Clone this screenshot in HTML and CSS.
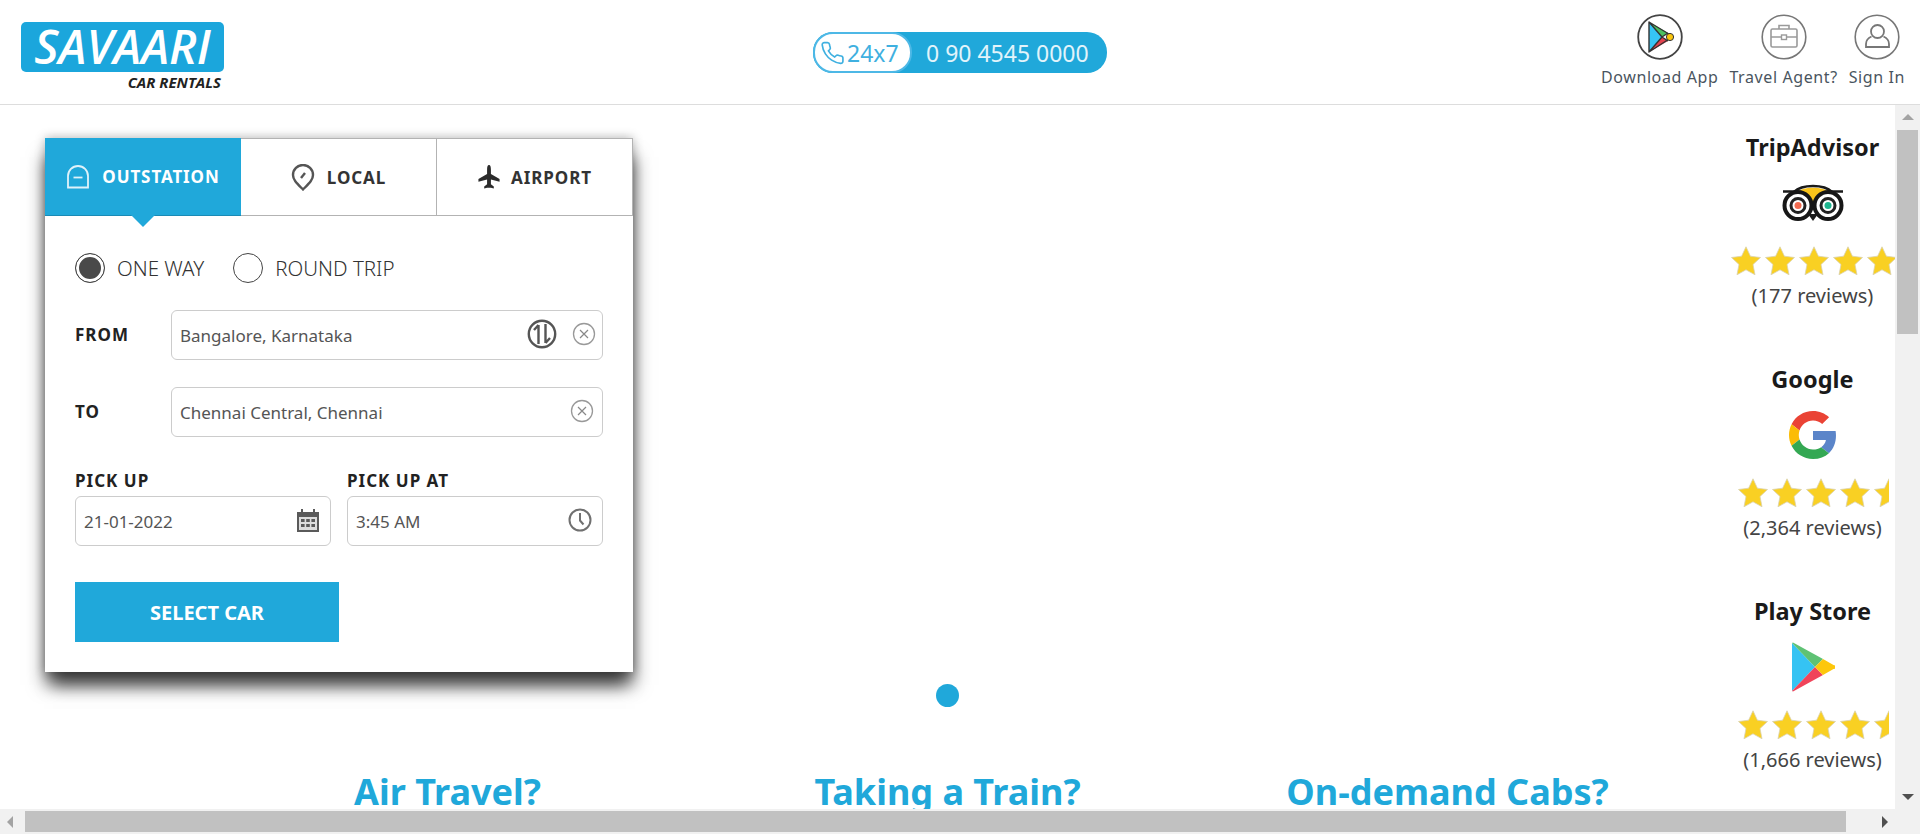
FILE: index.html
```html
<!DOCTYPE html>
<html lang="en">
<head>
  <meta charset="UTF-8" />
  <meta name="viewport" content="width=device-width, initial-scale=1.0" />
  <title>Savaari Car Rentals</title>
  <link rel="stylesheet" href="styles.css">
</head>
<body>
  <svg class="defs" width="0" height="0">
    <symbol id="star" viewBox="0 0 30 30">
      <polygon points="15,0.8 19.4,10.2 29.5,11.5 22,18.5 24,28.8 15,23.8 6,28.8 8,18.5 0.5,11.5 10.6,10.2" fill="#f9d023" stroke="#d9d2b0" stroke-width="0.8"/>
    </symbol>
    <symbol id="clear" viewBox="0 0 24 24">
      <circle cx="12" cy="12" r="10.5" fill="none" stroke="#999" stroke-width="1.3"/>
      <path d="M8 8l8 8M16 8l-8 8" stroke="#888" stroke-width="1.2"/>
    </symbol>
  </svg>

  <header class="header">
    <div class="logo">
      <div class="logo-box">SAVAARI</div>
      <div class="logo-sub">CAR RENTALS</div>
    </div>
    <div class="phone">
      <div class="phone-tag">
        <svg width="25" height="26" viewBox="0 0 24 24" fill="none" stroke="#3fb0e0" stroke-width="1.6"><path d="M22 16.92v3a2 2 0 0 1-2.18 2 19.79 19.79 0 0 1-8.63-3.07 19.5 19.5 0 0 1-6-6 19.79 19.79 0 0 1-3.07-8.67A2 2 0 0 1 4.11 2h3a2 2 0 0 1 2 1.72 12.84 12.84 0 0 0 .7 2.81 2 2 0 0 1-.45 2.11L8.09 9.91a16 16 0 0 0 6 6l1.27-1.27a2 2 0 0 1 2.11-.45 12.84 12.84 0 0 0 2.81.7A2 2 0 0 1 22 16.92z"/></svg>
        <span>24x7</span>
      </div>
      <div class="phone-num">0 90 4545 0000</div>
    </div>
    <nav class="nav">
      <a class="nav-item">
        <svg width="46" height="46" viewBox="0 0 46 46">
          <circle cx="23" cy="23" r="21.8" fill="#fff" stroke="#444" stroke-width="1.8"/>
          <polygon points="12,8 25,23 12,38" fill="#36c5f5"/>
          <polygon points="12,8 31,19 25,23" fill="#4cc15f"/>
          <polygon points="12,38 31,27 25,23" fill="#e5424f"/>
          <path d="M12 8L36 22.5L12 38zM12 8L25 23L12 38M25 23L31 19M25 23L31 27" fill="none" stroke="#333" stroke-width="1.4" stroke-linejoin="round"/>
          <circle cx="33" cy="23" r="3.6" fill="#fbc60e" stroke="#333" stroke-width="1"/>
        </svg>
        <span>Download App</span>
      </a>
      <a class="nav-item">
        <svg width="46" height="46" viewBox="0 0 46 46" fill="none" stroke="#9a9a9a">
          <circle cx="23" cy="23" r="21.8" stroke="#777" stroke-width="1.6"/>
          <rect x="10" y="15" width="26" height="18" rx="1.5" stroke-width="1.6"/>
          <path d="M18 15v-3.5h10V15M10 23h10M26 23h10" stroke-width="1.6"/>
          <rect x="20.5" y="21" width="5" height="4.5" stroke-width="1.4"/>
        </svg>
        <span>Travel Agent?</span>
      </a>
      <a class="nav-item">
        <svg width="46" height="46" viewBox="0 0 46 46" fill="none" stroke="#777" stroke-width="1.8">
          <circle cx="23" cy="23" r="21.8" stroke-width="1.6"/>
          <circle cx="23.5" cy="17.5" r="6.5"/>
          <path d="M17.5 22.5c-3.5 1.5-5.5 4-5.5 7.5v3h23v-3c0-3.5-2-6-5.5-7.5"/>
        </svg>
        <span>Sign In</span>
      </a>
    </nav>
  </header>

  <div class="window">
    <main class="main">
      <div class="hero">
        <section class="card">
          <div class="tabs">
            <div class="tab active">
              <svg width="24" height="24" viewBox="0 0 24 24" fill="none" stroke="#dff2fa" stroke-width="1.8"><path d="M2 22.5V11a10 10 0 0 1 20 0v11.5z"/><path d="M7.5 12.5h9"/></svg>
              <span>OUTSTATION</span>
            </div>
            <div class="tab">
              <svg width="24" height="27" viewBox="0 0 24 27" fill="none" stroke="#555" stroke-width="2.4"><path d="M12 25.5C6 19.5 2 16 2 11a10 10 0 0 1 20 0c0 5-4 8.5-10 14.5z"/><path d="M10 14l4-5"/></svg>
              <span>LOCAL</span>
            </div>
            <div class="tab tab-air">
              <svg width="24" height="26" viewBox="0 0 25 26"><path d="M12.5 0.5c1.5 0 2 2 2 5v4.500l9 5v3l-9-2.500v5l3 2.500v2l-3-.8h-4l-3 .8v-2l3-2.500v-5l-9 2.500v-3l9-5V5.500c0-3 .5-5 2-5z" fill="#2b2b2b"/></svg>
              <span>AIRPORT</span>
            </div>
          </div>
          <form class="form">
            <div class="trip">
              <label class="radio checked">ONE WAY</label>
              <label class="radio">ROUND TRIP</label>
            </div>
            <div class="row row-from">
              <span class="label">FROM</span>
              <div class="field">
                <input value="Bangalore, Karnataka" />
                <svg class="swap" width="30" height="30" viewBox="0 0 30 30" fill="none" stroke="#555" stroke-width="2.4"><circle cx="15" cy="15" r="13.2"/><path d="M11.5 25V6M11.5 6L7 11M18.5 5V24M18.5 24L23 19"/></svg>
                <svg class="clear" width="24" height="24"><use href="#clear"/></svg>
              </div>
            </div>
            <div class="row row-to">
              <span class="label">TO</span>
              <div class="field">
                <input value="Chennai Central, Chennai" />
                <svg class="clear" width="24" height="24"><use href="#clear"/></svg>
              </div>
            </div>
            <div class="when">
              <div class="when-col">
                <span class="label">PICK UP</span>
                <div class="field">
                  <input value="21-01-2022" />
                  <svg class="when-icon" width="24" height="24" viewBox="0 0 24 24" fill="#5a5a5a"><path d="M1 4h4V1h2v3h10V1h2v3h4v20H1z"/><rect x="3" y="9" width="18" height="13" fill="#ddd"/><rect x="5" y="11" width="3.6" height="3"/><rect x="10.2" y="11" width="3.6" height="3"/><rect x="15.4" y="11" width="3.6" height="3"/><rect x="5" y="16" width="3.6" height="3"/><rect x="10.2" y="16" width="3.6" height="3"/><rect x="15.4" y="16" width="3.6" height="3"/></svg>
                </div>
              </div>
              <div class="when-col">
                <span class="label">PICK UP AT</span>
                <div class="field">
                  <input value="3:45 AM" />
                  <svg class="when-icon" width="24" height="24" viewBox="0 0 24 24" fill="none" stroke="#707070" stroke-width="2"><circle cx="12" cy="12" r="10.5"/><path d="M12 5v7.5l3.5 4"/></svg>
                </div>
              </div>
            </div>
            <button type="button" class="submit">SELECT CAR</button>
          </form>
        </section>
        <div class="dots"><span class="dot"></span></div>
        <div class="promos">
          <h2>Air Travel?</h2>
          <h2>Taking a Train?</h2>
          <h2>On-demand Cabs?</h2>
        </div>
      </div>

      <aside class="ratings">
        <div class="rating">
          <h4>TripAdvisor</h4>
          <div class="rating-icon">
            <svg width="62" height="38" viewBox="0 0 62 38">
              <path d="M14 9C20 2 42 2 48 9L31 22z" fill="#f9c31a"/>
              <path d="M12 8C20 0 42 0 50 8" fill="none" stroke="#1a1a1a" stroke-width="2.5"/>
              <path d="M1 7.5h13M48 7.5h13" stroke="#1a1a1a" stroke-width="2.5"/>
              <path d="M26 30l5 7 5-7z" fill="#1a1a1a"/>
              <g fill="#fff" stroke="#161616" stroke-width="4">
                <circle cx="16" cy="21.5" r="13.5"/>
                <circle cx="46" cy="21.5" r="13.5"/>
              </g>
              <circle cx="16" cy="21.5" r="7" fill="#fff" stroke="#222" stroke-width="3"/>
              <circle cx="46" cy="21.5" r="7" fill="#fff" stroke="#222" stroke-width="3"/>
              <circle cx="16" cy="21.5" r="3.5" fill="#f26b50"/>
              <circle cx="46" cy="21.5" r="3.5" fill="#1fb58f"/>
            </svg>
          </div>
          <div class="stars stars-full">
            <svg width="34" height="30"><use href="#star" width="32" height="30"/></svg>
            <svg width="34" height="30"><use href="#star" width="32" height="30"/></svg>
            <svg width="34" height="30"><use href="#star" width="32" height="30"/></svg>
            <svg width="34" height="30"><use href="#star" width="32" height="30"/></svg>
            <svg width="34" height="30"><use href="#star" width="32" height="30"/></svg>
          </div>
          <p>(177 reviews)</p>
        </div>
        <div class="rating">
          <h4>Google</h4>
          <div class="rating-icon">
            <svg width="48" height="48" viewBox="0 0 48 48">
              <path fill="#EA4335" d="M24 9.5c3.54 0 6.71 1.22 9.21 3.6l6.85-6.85C35.9 2.38 30.47 0 24 0 14.62 0 6.51 5.38 2.56 13.22l7.98 6.19C12.43 13.72 17.74 9.5 24 9.5z"/>
              <path fill="#5b85c9" d="M46.98 24.55c0-1.57-.15-3.09-.38-4.55H24v9.02h12.94c-.58 2.96-2.26 5.48-4.78 7.18l7.73 6c4.51-4.18 7.09-10.36 7.09-17.65z"/>
              <path fill="#FBBC05" d="M10.53 28.59c-.48-1.45-.76-2.99-.76-4.59s.27-3.14.76-4.59l-7.98-6.19C.92 16.46 0 20.12 0 24c0 3.88.92 7.54 2.56 10.78l7.97-6.19z"/>
              <path fill="#34A853" d="M24 48c6.48 0 11.93-2.13 15.89-5.81l-7.73-6c-2.15 1.45-4.92 2.3-8.16 2.3-6.26 0-11.57-4.22-13.47-9.91l-7.98 6.19C6.51 42.62 14.62 48 24 48z"/>
            </svg>
          </div>
          <div class="stars">
            <svg width="34" height="30"><use href="#star" width="32" height="30"/></svg>
            <svg width="34" height="30"><use href="#star" width="32" height="30"/></svg>
            <svg width="34" height="30"><use href="#star" width="32" height="30"/></svg>
            <svg width="34" height="30"><use href="#star" width="32" height="30"/></svg>
            <svg width="34" height="30"><use href="#star" width="32" height="30"/></svg>
          </div>
          <p>(2,364 reviews)</p>
        </div>
        <div class="rating">
          <h4>Play Store</h4>
          <div class="rating-icon">
            <svg width="44" height="50" viewBox="0 0 44 50">
              <polygon points="1,1 24,25 1,49" fill="#35c3f3"/>
              <polygon points="1,1 2,0.5 32,17 24,25" fill="#5fc274"/>
              <polygon points="1,49 2,49.5 32,33 24,25" fill="#f0445a"/>
              <path d="M32 17l10.5 6a2 2 0 0 1 0 4L32 33l-8-8z" fill="#fdc70c"/>
            </svg>
          </div>
          <div class="stars">
            <svg width="34" height="30"><use href="#star" width="32" height="30"/></svg>
            <svg width="34" height="30"><use href="#star" width="32" height="30"/></svg>
            <svg width="34" height="30"><use href="#star" width="32" height="30"/></svg>
            <svg width="34" height="30"><use href="#star" width="32" height="30"/></svg>
            <svg width="34" height="30"><use href="#star" width="32" height="30"/></svg>
          </div>
          <p>(1,666 reviews)</p>
        </div>
      </aside>
    </main>

    <div class="vbar">
      <span class="arrow arrow-up"></span>
      <span class="vthumb"></span>
      <span class="arrow arrow-down"></span>
    </div>
    <div class="hbar">
      <span class="arrow arrow-left"></span>
      <span class="hthumb"></span>
      <span class="arrow arrow-right"></span>
    </div>
    <div class="corner"></div>
  </div>
</body>
</html>
```

FILE: styles.css
```css
* {
  box-sizing: border-box;
}
html, body {
  height: 100%;
}
body {
  margin: 0;
  display: flex;
  flex-direction: column;
  overflow: hidden;
  font-family: "Noto Sans", Arial, sans-serif;
  background: #fff;
  color: #333;
}
.defs {
  display: block;
  height: 0;
}

/* header */
.header {
  flex: none;
  height: 105px;
  display: grid;
  grid-template-columns: 1fr auto 1fr;
  border-bottom: 1px solid #ddd;
}
.logo {
  margin: 22px 0 0 21px;
  width: 203px;
}
.logo-box {
  height: 50px;
  border-radius: 5px;
  background: #1ba6dc;
  color: #fff;
  font-family: "Open Sans", sans-serif;
  font-style: italic;
  font-weight: 600;
  font-size: 47px;
  line-height: 48px;
  text-align: center;
}
.logo-sub {
  margin-top: 1px;
  padding-right: 3px;
  text-align: right;
  color: #222;
  font-family: "Open Sans", sans-serif;
  font-style: italic;
  font-weight: 700;
  font-size: 15px;
  line-height: 18px;
}
.phone {
  margin-top: 32px;
  width: 294px;
  height: 41px;
  display: flex;
  align-items: center;
  background: #20a8da;
  border-radius: 20px;
  font-size: 23px;
}
.phone-tag {
  width: 99px;
  height: 41px;
  padding-left: 5px;
  display: flex;
  align-items: center;
  gap: 2px;
  background: #fff;
  border: 2px solid #4db8e6;
  border-radius: 20px;
  color: #3fb0e0;
}
.phone-num {
  margin-left: 14px;
  color: #e2f4fb;
}
.nav {
  justify-self: end;
  display: flex;
  gap: 11px;
  padding: 14px 15px 0 0;
}
.nav-item {
  display: flex;
  flex-direction: column;
  align-items: center;
  color: #4a5560;
  font-size: 16px;
  letter-spacing: 0.6px;
  line-height: 22px;
}
.nav-item span {
  margin-top: 6px;
}

/* page area with painted scrollbars */
.window {
  flex: 1;
  min-height: 0;
  display: grid;
  grid-template-columns: 1fr 25px;
  grid-template-rows: 1fr 25px;
}
.main {
  display: grid;
  overflow: hidden;
}
.hero, .ratings {
  grid-area: 1 / 1;
}

/* booking card */
.card {
  margin: 33px 0 0 45px;
  width: 588px;
  height: 534px;
  background: #fff;
  box-shadow: 0 0 10px rgba(0, 0, 0, 0.3), 5px 16px 16px -3px rgba(0, 0, 0, 0.5), -4px 16px 16px -3px rgba(0, 0, 0, 0.5);
}
.tabs {
  display: grid;
  grid-template-columns: 196px 1fr 1fr;
  height: 78px;
}
.tab {
  position: relative;
  display: flex;
  align-items: center;
  justify-content: center;
  gap: 12px;
  border: 1px solid #b3b3b3;
  border-left: 0;
  font-size: 17px;
  font-weight: 700;
  letter-spacing: 0.9px;
  color: #333;
}
.tab.active {
  background: #20a8da;
  border: 0;
  border-bottom: 1px solid #1a8ab5;
  color: #fff;
}
.tab.active::after {
  content: "";
  position: absolute;
  left: 86px;
  top: 77px;
  border: 12px solid transparent;
  border-top-color: #20a8da;
  border-bottom: 0;
}
.tab-air {
  gap: 10px;
}
.form {
  padding: 37px 30px 30px;
}
.trip {
  display: flex;
  gap: 29px;
  font-size: 20.5px;
  font-weight: 300;
  color: #333;
}
.radio {
  display: flex;
  align-items: center;
  gap: 12px;
  line-height: 28px;
}
.radio::before {
  content: "";
  width: 28px;
  height: 28px;
  border: 1px solid #444;
  border-radius: 50%;
}
.radio.checked::before {
  background: #4a4a4a;
  box-shadow: inset 0 0 0 3px #fff;
}
.row {
  display: flex;
  align-items: center;
}
.row .label {
  width: 96px;
  flex: none;
}
.row-from {
  margin-top: 27px;
}
.row-to {
  margin-top: 27px;
}
.row-to .clear {
  margin-right: 1px;
}
.label {
  font-size: 17px;
  font-weight: 700;
  letter-spacing: 1px;
  line-height: 22px;
  color: #222;
}
.field {
  flex: 1;
  height: 50px;
  display: flex;
  align-items: center;
  border: 1px solid #ccc;
  border-radius: 6px;
  padding: 0 7px 0 8px;
}
.field input {
  flex: 1;
  min-width: 0;
  border: 0;
  outline: 0;
  padding: 0;
  font: 17px "Noto Sans", Arial, sans-serif;
  color: #555;
}
.swap {
  margin: 0 15px 2px 0;
}
.clear {
  margin: 0 -1px 2px 0;
}
.when {
  margin-top: 33px;
  display: grid;
  grid-template-columns: 256px 256px;
  gap: 16px;
}
.when-col .field {
  margin-top: 4px;
}
.when-icon {
  margin: 0 3px 3px 0;
}
.submit {
  margin-top: 36px;
  width: 264px;
  height: 60px;
  display: block;
  background: #20a8da;
  border: 0;
  color: #fff;
  font: 700 20px "Noto Sans", Arial, sans-serif;
}

/* slider dot and promo headings */
.dots {
  margin-top: 12px;
  display: flex;
  justify-content: center;
}
.dot {
  width: 23px;
  height: 23px;
  border-radius: 50%;
  background: #20a8da;
}
.promos {
  margin-top: 60px;
  display: grid;
  grid-template-columns: repeat(3, 500px);
  justify-content: center;
}
.promos h2 {
  margin: 0;
  text-align: center;
  font-size: 36px;
  line-height: 50px;
  font-weight: 700;
  color: #20a8da;
}

/* review column */
.ratings {
  justify-self: end;
  width: 165px;
  padding-top: 27px;
  text-align: center;
}
.rating {
  height: 232px;
}
.rating h4 {
  margin: 0;
  font-size: 23.5px;
  line-height: 30px;
  font-weight: 700;
  color: #1a1a1a;
}
.rating-icon {
  margin-top: 17px;
  height: 48px;
  display: flex;
  align-items: center;
  justify-content: center;
}
.stars {
  margin: 19px auto 0;
  width: 152px;
  height: 30px;
  display: flex;
  overflow: hidden;
}
.stars svg {
  flex: none;
}
.stars-full {
  width: 170px;
  margin-left: 0;
}
.rating p {
  margin: 8px -20px 0;
  font-size: 20px;
  line-height: 24px;
  color: #444;
}

/* scrollbars */
.vbar, .hbar, .corner {
  background: #f1f1f1;
}
.vbar {
  display: flex;
  flex-direction: column;
  align-items: center;
  padding: 9px 0;
}
.vthumb {
  margin: 10px 0 auto;
  width: 21px;
  height: 204px;
  background: #c1c1c1;
}
.hbar {
  display: flex;
  align-items: center;
  padding: 0 7px;
}
.hthumb {
  margin: 0 auto 0 12px;
  width: 1821px;
  height: 21px;
  background: #c1c1c1;
}
.arrow {
  flex: none;
  width: 0;
  height: 0;
  border: 6px solid transparent;
}
.arrow-up {
  border-top: 0;
  border-bottom: 6px solid #a3a3a3;
}
.arrow-down {
  border-bottom: 0;
  border-top: 6px solid #505050;
}
.arrow-left {
  border-left: 0;
  border-right: 6px solid #a3a3a3;
}
.arrow-right {
  border-right: 0;
  border-left: 6px solid #505050;
}
```
